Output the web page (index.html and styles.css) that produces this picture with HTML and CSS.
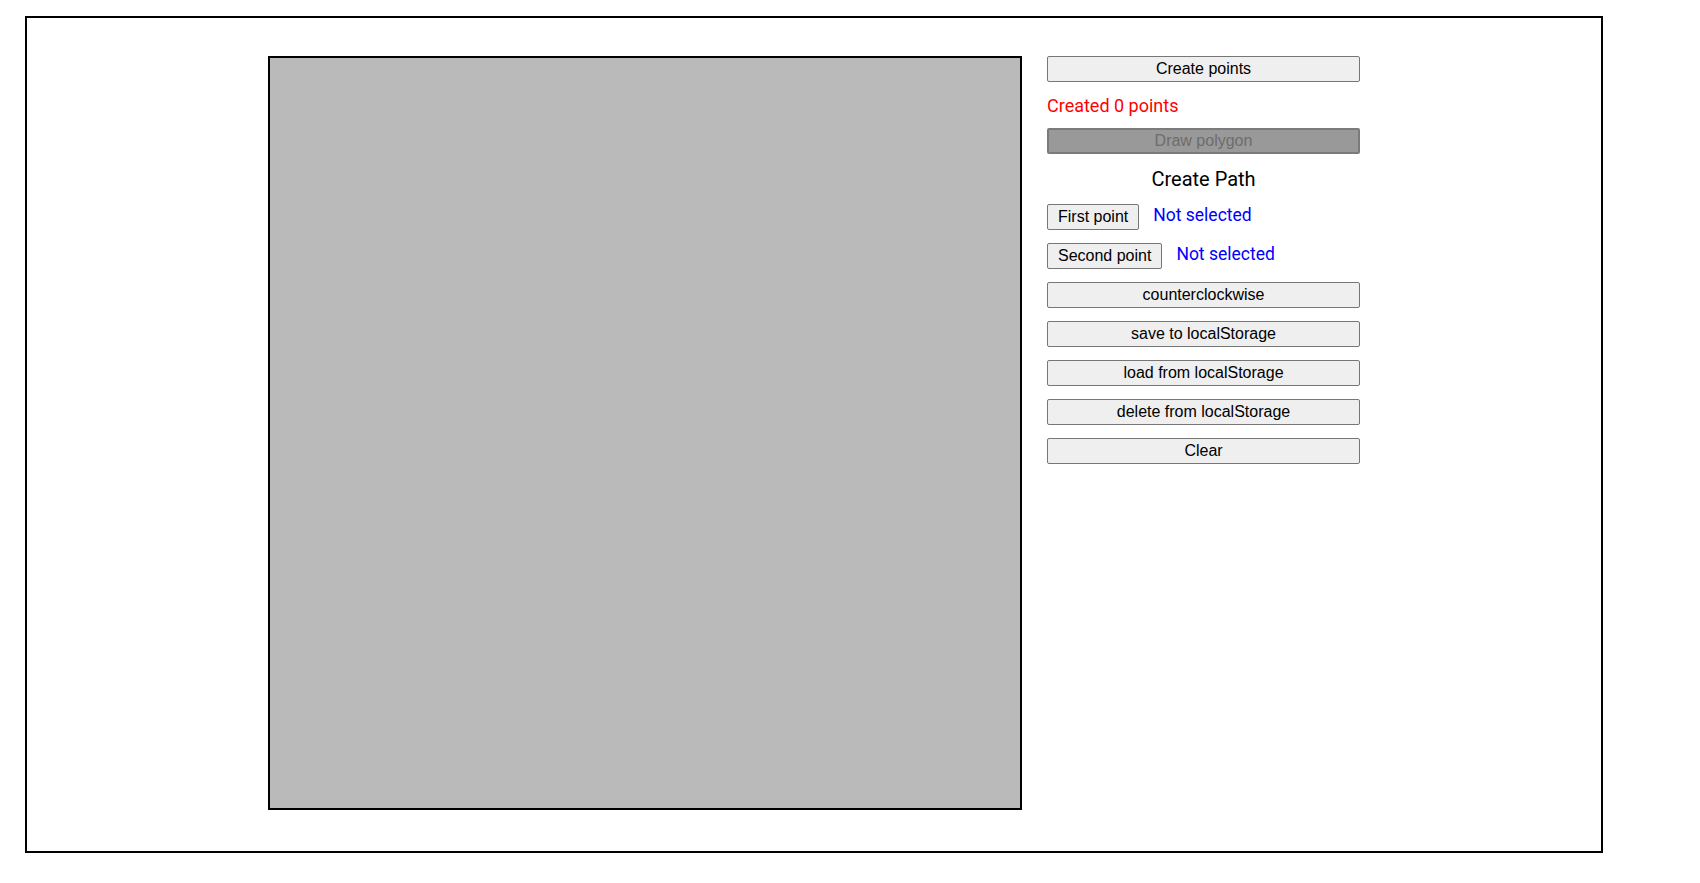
FILE: index.html
```html
<!DOCTYPE html>
<html>
<head>
<meta charset="utf-8" />
<title>Polygon</title>
<link rel="stylesheet" href="styles.css">
</head>
<body>

<div id="wrap">
    <div id="board"></div>
    <div id="panel">
        <button class="btn wide">Create points</button>
        <div class="info red">Created 0 points</div>
        <button class="btn wide" disabled>Draw polygon</button>
        <div class="title">Create Path</div>
        <div class="row">
            <button class="btn">First point</button>
            <span class="blue">Not selected</span>
        </div>
        <div class="row">
            <button class="btn">Second point</button>
            <span class="blue">Not selected</span>
        </div>
        <button class="btn wide">counterclockwise</button>
        <button class="btn wide">save to localStorage</button>
        <button class="btn wide">load from localStorage</button>
        <button class="btn wide">delete from localStorage</button>
        <button class="btn wide">Clear</button>
    </div>
</div>

</body>
</html>
```

FILE: styles.css
```css
body {
	margin:0;
	font-family:Roboto, "Liberation Sans", Arial, sans-serif;
	font-size:18px;
	background:#fff;
}
#wrap {
	margin:16px 0 0 25px;
	width:1574px;
	height:795px;
	border:2px solid #000;
	padding:38px 0 0 0;
	display:flex;
	justify-content:center;
	align-items:flex-start;
	gap:25px;
}
#board {
	width:750px;
	height:750px;
	background:#bababa;
	border:2px solid #000;
}
#panel {
	width:313px;
	display:flex;
	flex-direction:column;
	gap:13px;
}
.btn {
	font-family:"Liberation Sans", Arial, sans-serif;
	font-size:16px;
	line-height:18px;
	color:#000;
	background:#efefef;
	border:1px solid #767676;
	border-radius:2px;
	padding:3px 10px;
	height:26px;
}
.btn.wide {
	width:100%;
}
.btn[disabled] {
	background:#999;
	border:2px solid #7b7b7b;
	color:#6d6d6d;
	padding:2px 10px;
}
.info {
	line-height:20px;
	padding-top:1px;
	margin-bottom:-1px;
}
.red {
	color:#f00;
}
.blue {
	color:#00f;
	font-size:17.5px;
	line-height:21px;
	padding-top:1px;
}
.title {
	text-align:center;
	font-size:20px;
}
.row {
	display:flex;
	align-items:flex-start;
	gap:14px;
}
```
